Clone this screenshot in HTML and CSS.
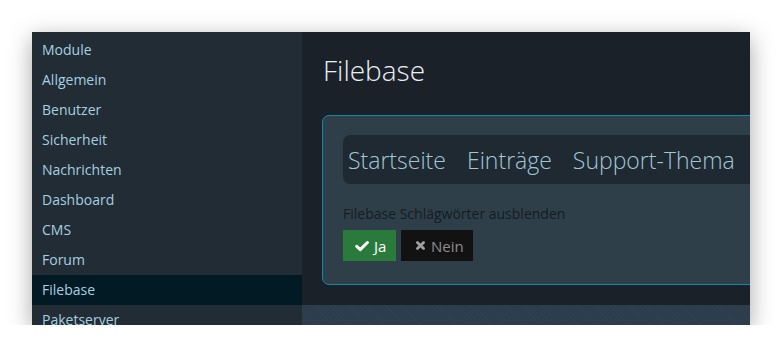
FILE: index.html
```html
<!DOCTYPE html>
<html lang="de">
<head>
  <meta charset="UTF-8" />
  <title>Filebase</title>
  <link rel="stylesheet" href="styles.css">
</head>
<body>

<div class="window">
  <div class="sidebar">
    <a href="#" class="nav-item">Module</a>
    <a href="#" class="nav-item">Allgemein</a>
    <a href="#" class="nav-item">Benutzer</a>
    <a href="#" class="nav-item">Sicherheit</a>
    <a href="#" class="nav-item">Nachrichten</a>
    <a href="#" class="nav-item">Dashboard</a>
    <a href="#" class="nav-item">CMS</a>
    <a href="#" class="nav-item">Forum</a>
    <a href="#" class="nav-item active">Filebase</a>
    <a href="#" class="nav-item">Paketserver</a>
  </div>

  <div class="main">
    <div class="content">
      <h1 class="page-title">Filebase</h1>

      <div class="panel">
        <div class="crumbs">
          <span class="crumb">Startseite</span>
          <span class="crumb">Einträge</span>
          <span class="crumb">Support-Thema</span>
        </div>

        <div class="field-label">Filebase Schlägwörter ausblenden</div>
        <div class="toggle">
          <button class="btn btn-yes">
            <svg class="icon" viewBox="0 0 16 16"><path d="M2 8.4 L6 12.2 L14.2 4" fill="none" stroke="currentColor" stroke-width="3.4" stroke-linecap="round" stroke-linejoin="round"/></svg>
            Ja
          </button>
          <button class="btn btn-no">
            <svg class="icon icon-x" viewBox="0 0 16 16"><path d="M3.5 3.5 L12.5 12.5 M12.5 3.5 L3.5 12.5" fill="none" stroke="currentColor" stroke-width="4" stroke-linecap="round"/></svg>
            Nein
          </button>
        </div>
      </div>
    </div>
  </div>
</div>

</body>
</html>
```

FILE: styles.css
```css
body {
  margin: 0;
  background-color: #ffffff;
  font-family: 'Open Sans', 'Noto Sans', sans-serif;
}

.window {
  margin: 32px 0 0 32px;
  width: 718px;
  height: 293px;
  display: flex;
  overflow: hidden;
  box-shadow: 0 6px 22px rgba(0, 0, 0, 0.35);
}

.sidebar {
  width: 270px;
  flex-shrink: 0;
  padding-top: 3px;
  background-color: #212c34;
  display: flex;
  flex-direction: column;
}
.nav-item {
  display: block;
  height: 30px;
  line-height: 30px;
  padding-left: 10px;
  font-size: 14px;
  color: #a6cfe1;
  text-decoration: none;
}
.nav-item.active {
  background-color: #021a23;
}

.main {
  flex: 1;
  min-width: 0;
  background-color: #2d3d4b;
  background-image: repeating-linear-gradient(45deg, rgba(255,255,255,0.015) 0 1px, rgba(0,0,0,0.02) 1px 3px);
}
.content {
  background-color: #1b2128;
  padding: 19px 0 20px 21px;
}
.page-title {
  margin: 0;
  font-size: 28px;
  line-height: 38px;
  font-weight: 300;
  color: #e9eff3;
}

.panel {
  margin: 26px -20px 0 -1px;
  padding: 19px 0 23px 20px;
  background-color: #2f3f4a;
  border: 1px solid #0f88b0;
  border-radius: 7px;
}
.crumbs {
  display: flex;
  gap: 21px;
  height: 49px;
  align-items: center;
  padding-left: 5px;
  background-color: #1e2931;
  border-radius: 7px;
  white-space: nowrap;
}
.crumb {
  font-size: 23px;
  font-weight: 300;
  color: #a3c6d6;
}

.field-label {
  margin-top: 20px;
  font-size: 14px;
  line-height: 20px;
  color: #151c21;
}
.toggle {
  display: flex;
  gap: 5px;
  margin-top: 6px;
}
.btn {
  height: 31px;
  border: none;
  font-family: inherit;
  font-size: 15px;
  display: flex;
  align-items: center;
  gap: 5px;
  cursor: pointer;
}
.btn-yes {
  width: 53px;
  padding-left: 12px;
  background-color: #2a7a3b;
  color: #ffffff;
}
.btn-no {
  width: 72px;
  padding-left: 14px;
  background-color: #121212;
  color: #8d8d8d;
}
.icon {
  width: 14px;
  height: 14px;
}
.icon-x {
  width: 11px;
  height: 11px;
  color: #a0a0a0;
}
```
